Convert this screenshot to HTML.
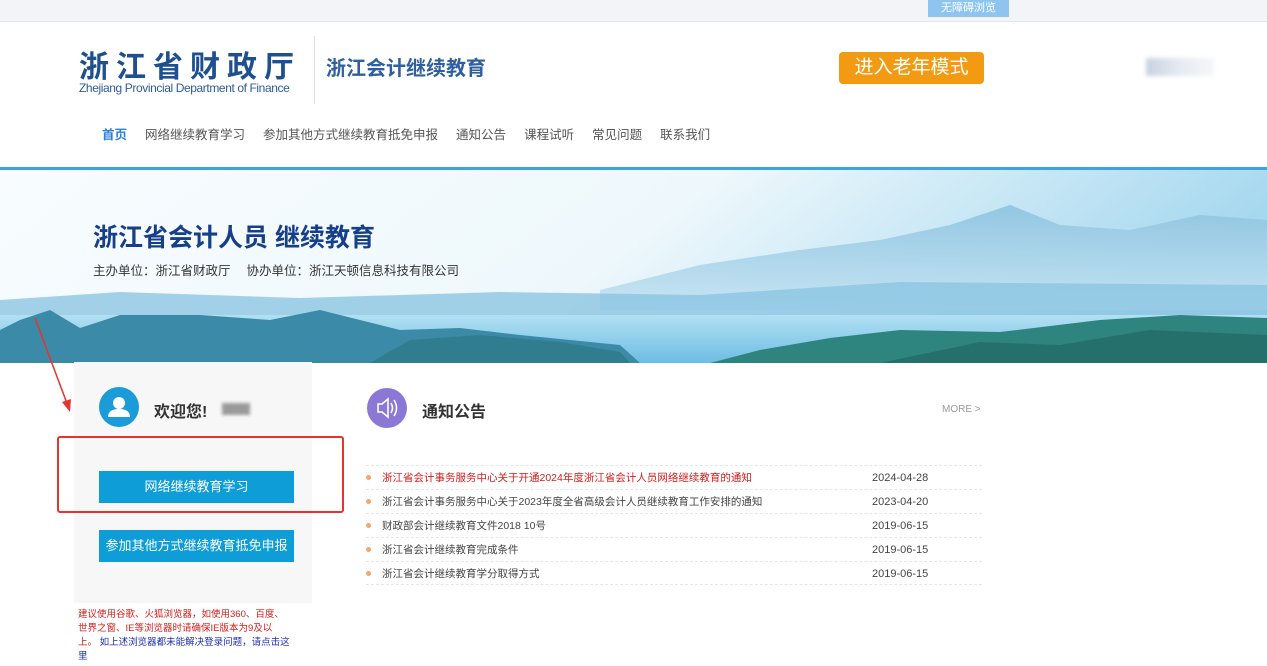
<!DOCTYPE html>
<html><head><meta charset="utf-8"><style>
*{margin:0;padding:0;box-sizing:border-box}
body{width:1267px;height:666px;overflow:hidden;background:#fff;font-family:"Liberation Sans","Noto Sans CJK SC",sans-serif;position:relative}
.a{position:absolute;white-space:nowrap}
.nav span{margin-right:18px}
.row{position:absolute;left:366px;width:616px;height:24px;border-top:1px dashed #e6e6e6;font-size:10.5px;color:#444;line-height:24px}
.row i{position:absolute;left:0;top:9px;width:5px;height:5px;border-radius:50%;background:#f5a66b}
.row s{text-decoration:none;position:absolute;left:16px}
.row b{font-weight:normal;position:absolute;left:506px;font-size:11px}
.btn{position:absolute;left:99px;width:195px;height:32px;background:#0f9dd8;color:#fff;text-align:center;line-height:32px;font-size:13px}
</style></head><body>
<div class="a" style="left:0;top:0;width:1267px;height:22px;background:#f3f4f7;border-bottom:1px solid #e8e8e8"></div>
<div class="a" style="left:928px;top:0;width:81px;height:17px;background:#8ec5f0;color:#fff;font-size:11px;text-align:center;line-height:17px">无障碍浏览</div>
<div class="a" style="left:79px;top:42px;font-size:30px;font-weight:bold;color:#1e4f8e;letter-spacing:7px">浙江省财政厅</div>
<div class="a" style="left:79px;top:81px;font-size:12px;color:#2f5a96;letter-spacing:-0.4px">Zhejiang Provincial Department of Finance</div>
<div class="a" style="left:314px;top:36px;width:1px;height:68px;background:#ddd"></div>
<div class="a" style="left:326px;top:52px;font-size:20px;font-weight:bold;color:#2f5f9e">浙江会计继续教育</div>
<div class="a" style="left:839px;top:52px;width:145px;height:32px;background:#f29a12;border-radius:4px;color:#fff;font-size:19px;text-align:center;line-height:32px">进入老年模式</div>
<div class="a" style="left:1146px;top:58px;width:68px;height:18px;background:linear-gradient(90deg,#c8d2e0,#e6ebf2,#f5f7fa);filter:blur(2px)"></div>
<div class="a nav" style="left:102px;top:124px;font-size:12.5px;color:#555"><span style="color:#2a7fd4;font-weight:bold">首页</span><span>网络继续教育学习</span><span>参加其他方式继续教育抵免申报</span><span>通知公告</span><span>课程试听</span><span>常见问题</span><span>联系我们</span></div>
<div class="a" style="left:0;top:167px;width:1267px;height:3px;background:#3ea3dc"></div>
<svg class="a" style="left:0;top:170px" width="1267" height="193" viewBox="0 0 1267 193">
<defs><linearGradient id="sk" x1="0" y1="0" x2="1" y2="0.2"><stop offset="0" stop-color="#f8fcfe"/><stop offset="0.55" stop-color="#eef8fc"/><stop offset="1" stop-color="#a6d8ef"/></linearGradient>
<linearGradient id="wa" x1="0" y1="0" x2="0" y2="1"><stop offset="0" stop-color="#b3e0f3"/><stop offset="1" stop-color="#6cbde3"/></linearGradient>
<linearGradient id="mt" x1="0" y1="0" x2="0" y2="1"><stop offset="0" stop-color="#8ec3e0"/><stop offset="1" stop-color="#c5e4f2"/></linearGradient></defs>
<rect width="1267" height="193" fill="url(#sk)"/>
<path d="M600 120 L700 95 L800 80 L880 70 L950 55 L1010 35 L1060 55 L1130 60 L1200 45 L1267 50 L1267 140 L600 140Z" fill="url(#mt)" opacity="0.9"/>
<path d="M0 130 L120 122 L300 128 L500 122 L700 125 L900 112 L1267 115 L1267 150 L0 150Z" fill="#8cc5e2" opacity="0.8"/>
<rect y="145" width="1267" height="48" fill="url(#wa)"/>
<path d="M0 193 L0 160 L20 150 L50 140 L80 158 L120 145 L200 145 L270 150 L320 140 L360 150 L400 160 L460 158 L520 165 L620 175 L640 193Z" fill="#3a8aa8"/>
<path d="M370 193 L410 170 L480 165 L560 172 L620 182 L630 193Z" fill="#2f7d8e"/>
<path d="M710 193 L760 180 L830 168 L900 160 L1000 162 L1100 150 L1180 145 L1267 148 L1267 193Z" fill="#2e8580"/>
<path d="M880 193 L980 172 L1060 175 L1150 160 L1267 165 L1267 193Z" fill="#26706c"/>
</svg>
<div class="a" style="left:93px;top:218px;font-size:25px;font-weight:bold;color:#163f8a">浙江省会计人员 继续教育</div>
<div class="a" style="left:93px;top:260px;font-size:12.5px;color:#333">主办单位：浙江省财政厅　 协办单位：浙江天顿信息科技有限公司</div>
<div class="a" style="left:74px;top:362px;width:238px;height:241px;background:#f7f7f7"></div>
<div class="a" style="left:99px;top:387px;width:40px;height:40px;border-radius:50%;background:#1b9bd7"></div>
<svg class="a" style="left:99px;top:387px" width="40" height="40"><circle cx="20" cy="16" r="6" fill="#fff"/><path d="M9 30 Q9 22 20 22 Q31 22 31 30Z" fill="#fff"/></svg>
<div class="a" style="left:154px;top:398px;font-size:16px;font-weight:bold;color:#333">欢迎您!</div>
<div class="a" style="left:222px;top:403px;width:28px;height:12px;background:#9a9a9a;filter:blur(1.5px)"></div>
<div class="btn" style="top:471px">网络继续教育学习</div>
<div class="btn" style="top:530px;font-size:13px">参加其他方式继续教育抵免申报</div>
<div class="a" style="left:57px;top:436px;width:287px;height:77px;border:2px solid #e8332c;border-radius:3px"></div>
<svg class="a" style="left:28px;top:310px" width="50" height="110"><line x1="7" y1="8" x2="40" y2="96" stroke="#e8332c" stroke-width="1.5"/><path d="M34 92 L42 102 L43 89Z" fill="#e8332c"/></svg>
<div class="a" style="left:78px;top:608px;font-size:9.5px;line-height:14px;color:#d0201c;white-space:normal;width:212px">建议使用谷歌、火狐浏览器，如使用360、百度、世界之窗、IE等浏览器时请确保IE版本为9及以上。 <span style="color:#1c2fb0">如上述浏览器都未能解决登录问题，请点击这里</span></div>
<div class="a" style="left:367px;top:388px;width:40px;height:40px;border-radius:50%;background:#8a78d4"></div>
<svg class="a" style="left:367px;top:388px" width="40" height="40"><path d="M11 16 H15 L21 11 V29 L15 24 H11Z" fill="none" stroke="#fff" stroke-width="1.6"/><path d="M24 15 Q27 20 24 25 M27 12 Q32 20 27 28" fill="none" stroke="#fff" stroke-width="1.6"/></svg>
<div class="a" style="left:422px;top:398px;font-size:16px;font-weight:bold;color:#333">通知公告</div>
<div class="a" style="left:942px;top:404px;font-size:10px;color:#999">MORE &gt;</div>
<div class="row" style="top:465px"><i></i><s style="color:#d0201c">浙江省会计事务服务中心关于开通2024年度浙江省会计人员网络继续教育的通知</s><b>2024-04-28</b></div>
<div class="row" style="top:489px"><i></i><s>浙江省会计事务服务中心关于2023年度全省高级会计人员继续教育工作安排的通知</s><b>2023-04-20</b></div>
<div class="row" style="top:513px"><i></i><s>财政部会计继续教育文件2018 10号</s><b>2019-06-15</b></div>
<div class="row" style="top:537px"><i></i><s>浙江省会计继续教育完成条件</s><b>2019-06-15</b></div>
<div class="row" style="top:561px;border-bottom:1px dashed #e6e6e6"><i></i><s>浙江省会计继续教育学分取得方式</s><b>2019-06-15</b></div>
</body></html>
